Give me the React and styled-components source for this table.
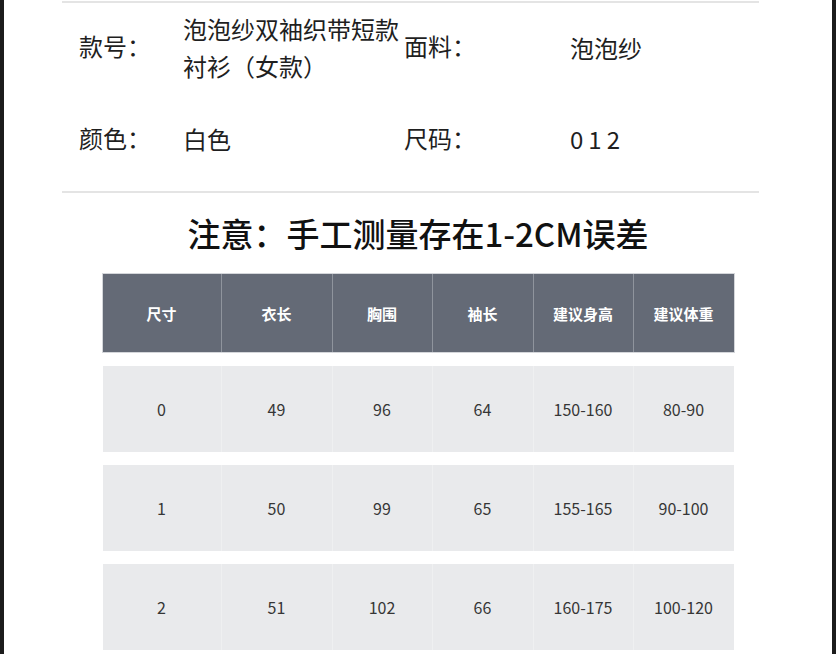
import React from 'react';
import styled, { createGlobalStyle } from 'styled-components';

const GlobalStyle = createGlobalStyle`
  html, body {
    margin: 0;
    padding: 0;
    background: #ffffff;
  }
  body {
    font-family: "Noto Sans CJK SC", "Noto Sans", sans-serif;
  }
`;

// page frame with the dark edges on both sides
const Page = styled.div`
  width: 836px;
  height: 654px;
  box-sizing: border-box;
  border-left: 4px solid #1c1c1c;
  border-right: 4px solid #1c1c1c;
  background: #ffffff;
  overflow: hidden;
  padding-top: 1px;
`;

const Info = styled.div`
  margin: 0 73px 0 58px;
  border-top: 2px solid #e4e4e4;
  border-bottom: 2px solid #e4e4e4;
  padding: 7px 0 34px 17px;
  display: grid;
  grid-template-columns: 104px 221px 166px 1fr;
  row-gap: 36px;
  align-items: center;
  font-size: 24px;
  line-height: 37px;
  color: #1f1f1f;
`;

const Label = styled.div`
  white-space: nowrap;
  margin-top: -3px;
`;

const Value = styled.div`
  letter-spacing: ${p => p.$spaced ? '5px' : '0'};
`;

const Title = styled.h2`
  margin: 20px 0 0;
  text-align: center;
  font-size: 33px;
  line-height: 40px;
  font-weight: 500;
  color: #111111;
`;

const Table = styled.div`
  width: 631px;
  margin: 21px auto 0;
  display: flex;
  flex-direction: column;
  gap: 13px;
`;

const Row = styled.div`
  display: grid;
  grid-template-columns: 118px 111px 100px 101px 100px 101px;
  height: ${p => p.$head ? '78px' : '86px'};
  margin-bottom: ${p => p.$head ? '1px' : '0'};
  background: ${p => p.$head ? '#646a76' : '#e9eaec'};
  box-shadow: ${p => p.$head ? '0 0 0 1px #d4d6da' : 'none'};
`;

const Cell = styled.div`
  display: flex;
  align-items: center;
  justify-content: center;
  border-left: 1px solid ${p => p.$head ? '#8f949d' : '#eff0f1'};
  &:first-child {
    border-left: none;
  }
  font-size: ${p => p.$head ? '15px' : '16px'};
  font-weight: ${p => p.$head ? 600 : 400};
  color: ${p => p.$head ? '#ffffff' : '#363636'};
`;

const head = ['尺寸', '衣长', '胸围', '袖长', '建议身高', '建议体重'];

const rows = [
  ['0', '49', '96', '64', '150-160', '80-90'],
  ['1', '50', '99', '65', '155-165', '90-100'],
  ['2', '51', '102', '66', '160-175', '100-120'],
];

export default function App() {
  return (
    <Page>
      <GlobalStyle />
      <Info>
        <Label>款号：</Label>
        <Value>泡泡纱双袖织带短款衬衫（女款）</Value>
        <Label>面料：</Label>
        <Value>泡泡纱</Value>
        <Label>颜色：</Label>
        <Value>白色</Value>
        <Label>尺码：</Label>
        <Value $spaced>012</Value>
      </Info>
      <Title>注意：手工测量存在1-2CM误差</Title>
      <Table>
        <Row $head>
          {head.map(h => <Cell $head key={h}>{h}</Cell>)}
        </Row>
        {rows.map(r => (
          <Row key={r[0]}>
            {r.map((v, i) => <Cell key={i}>{v}</Cell>)}
          </Row>
        ))}
      </Table>
    </Page>
  );
}
